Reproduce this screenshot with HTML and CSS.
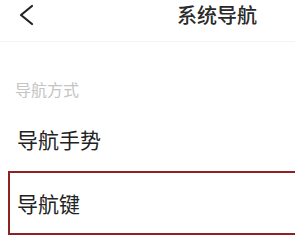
FILE: index.html
```html
<!DOCTYPE html>
<html lang="zh">
<head>
<meta charset="utf-8">
<link rel="stylesheet" href="styles.css">
</head>
<body>
<div class="page">
  <header class="topbar">
    <svg class="back" width="20" height="24" viewBox="0 0 20 24" aria-hidden="true">
      <path d="M16 3 L5 12 L16 21" fill="none" stroke="#222" stroke-width="2.2" stroke-linecap="round" stroke-linejoin="round"/>
    </svg>
    <div class="title">系统导航</div>
  </header>
  <div class="section-label">导航方式</div>
  <div class="item">导航手势</div>
  <div class="item item-selected">导航键</div>
</div>
</body>
</html>
```
FILE: styles.css
```css
html, body {
  margin: 0;
  padding: 0;
  background: #fff;
}
body {
  font-family: "Noto Sans CJK SC", "Noto Sans", sans-serif;
  color: #222;
  overflow: hidden;
}
.page {
  width: 295px;
  height: 246px;
  overflow: hidden;
}
.topbar {
  height: 41px;
  border-bottom: 1px solid #f4f4f4;
  display: flex;
  align-items: flex-start;
}
.back {
  margin-left: 16px;
  margin-top: 3px;
  flex: none;
}
.title {
  margin-left: auto;
  margin-right: 38px;
  font-size: 20px;
  line-height: normal;
  font-weight: 500;
  color: #2a2a2a;
}
.section-label {
  padding-top: 36px;
  padding-left: 15px;
  font-size: 16px;
  line-height: 22px;
  color: #c4c4c4;
}
.item {
  margin-top: 25px;
  padding-left: 17px;
  font-size: 21px;
  line-height: 28px;
  color: #222;
}
.item-selected {
  margin-top: 18px;
  margin-left: 8px;
  margin-right: -20px;
  height: 64px;
  box-sizing: border-box;
  border: 2px solid #8b2323;
  display: flex;
  align-items: center;
  padding-left: 7px;
}
```
